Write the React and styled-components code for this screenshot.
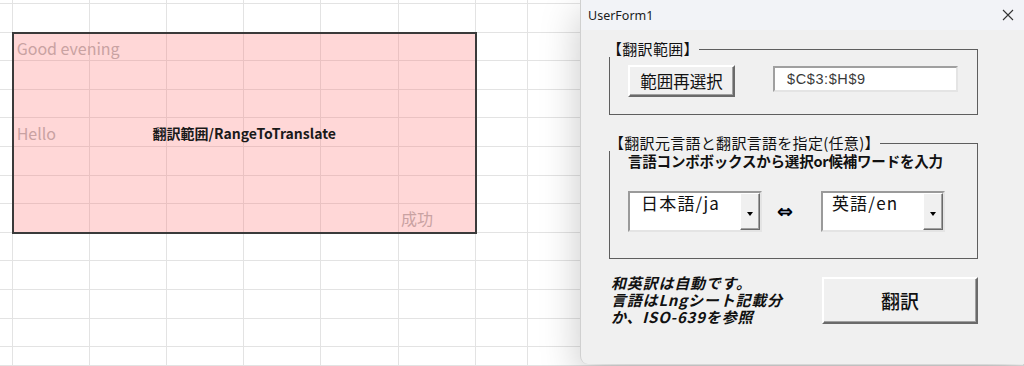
import React from "react"
import styled, { createGlobalStyle } from "styled-components"

const GlobalStyle = createGlobalStyle`
  html, body {
    margin: 0;
    padding: 0;
    width: 1024px;
    height: 366px;
    overflow: hidden;
    background: #ffffff;
  }
  #root {
    position: relative;
    width: 1024px;
    height: 366px;
  }
`

const COLS = 9
const ROWS = 14

const Sheet = styled.div`
  display: grid;
  grid-template-columns: 12.7px repeat(6, 77.2px) 52.3px 1fr;
  grid-template-rows: 4px repeat(12, 28.6px) 1fr;
  width: 1024px;
  height: 366px;
  font-family: "Noto Sans CJK JP", "Noto Sans", sans-serif;
`

const Cell = styled.div`
  border-right: 1px solid #e3e3e3;
  border-bottom: 1px solid #e3e3e3;
  grid-column: ${p => p.$col};
  grid-row: ${p => p.$row};
`

const Range = styled.div`
  grid-column: 2 / 8;
  grid-row: 3 / 10;
  margin: -1px -1px -1px -1px;
  border: 2px solid #3a3a3a;
  background: rgba(255, 100, 100, 0.26);
  display: grid;
  grid-template-columns: repeat(6, 1fr);
  grid-template-rows: repeat(7, 1fr);
  z-index: 1;
`

const CellText = styled.div`
  grid-column: ${p => p.$col};
  grid-row: ${p => p.$row};
  display: flex;
  align-items: center;
  justify-content: ${p => (p.$center ? "center" : "flex-start")};
  padding-left: ${p => (p.$center ? "0" : "3px")};
  font-size: ${p => (p.$bold ? "14px" : "16px")};
  font-weight: ${p => (p.$bold ? 700 : 400)};
  color: ${p => (p.$bold ? "#1a1a1a" : "#c9a2a2")};
  white-space: nowrap;
`

const Dialog = styled.div`
  position: absolute;
  left: 580px;
  top: 0;
  width: 444px;
  height: 364px;
  background: #f0f0f0;
  border-left: 1px solid #d0d0d0;
  box-sizing: border-box;
  border-radius: 0 0 0 8px;
  box-shadow: 0 12px 40px rgba(0, 0, 0, 0.22);
  display: flex;
  flex-direction: column;
  z-index: 2;
  font-family: "Noto Sans CJK JP", "Noto Sans", sans-serif;
  color: #111;
`

const TitleBar = styled.div`
  height: 30px;
  flex: 0 0 30px;
  background: #f2f3f7;
  display: flex;
  align-items: center;
  justify-content: space-between;
  padding: 0 10px 0 7px;
  font-family: "Noto Sans", "Open Sans", sans-serif;
  font-size: 12.5px;
  color: #1b1b1b;
`

const Body = styled.div`
  display: flex;
  flex-direction: column;
  padding: 11px 46px 0 28px;
`

const Frame = styled.fieldset`
  margin: ${p => (p.$gap ? `${p.$gap}px 0 0` : "0")};
  padding: ${p => p.$pad};
  min-width: 0;
  border: 1px solid #5e5e5e;
  border-radius: 0;
`

/* a legend sits after the fieldset's left padding, so pull it back to the border */
const Legend = styled.legend`
  padding: 0;
  margin-left: ${p => p.$shift}px;
  font-size: 15px;
  line-height: 16px;
  color: #111;
  letter-spacing: 0.3px;
`

const Row = styled.div`
  display: flex;
  align-items: ${p => p.$align || "flex-start"};
  margin-top: ${p => p.$top || 0}px;
`

const RaisedButton = styled.button`
  width: ${p => p.$w}px;
  height: ${p => p.$h}px;
  box-sizing: border-box;
  background: #f0f0f0;
  border: 2px solid;
  border-color: #ffffff #6a6a6a #6a6a6a #ffffff;
  box-shadow: inset -1px -1px 0 #a0a0a0;
  font-family: "Noto Sans CJK JP", sans-serif;
  font-size: ${p => p.$size}px;
  font-weight: ${p => p.$weight || 400};
  color: #111;
  padding: 0;
  display: flex;
  align-items: center;
  justify-content: center;
`

const TextBox = styled.div`
  width: 185px;
  height: 26px;
  box-sizing: border-box;
  margin: 1px 0 0 38px;
  background: #fff;
  border: 2px solid;
  border-color: #a0a0a0 #e4e4e4 #e4e4e4 #a0a0a0;
  padding-left: 12px;
  display: flex;
  align-items: center;
  font-family: "Liberation Sans", Arial, sans-serif;
  font-size: 14.5px;
  letter-spacing: 0.6px;
  color: #3a3a3a;
`

const Caption = styled.div`
  font-size: 14.5px;
  line-height: 18px;
  font-weight: 700;
  letter-spacing: -0.2px;
  white-space: nowrap;
  margin-top: 1px;
`

const Combo = styled.div`
  width: ${p => p.$w}px;
  height: 41px;
  box-sizing: border-box;
  background: #fff;
  border: 2px solid;
  border-color: #9a9a9a #e4e4e4 #e4e4e4 #9a9a9a;
  display: flex;
`

const ComboText = styled.div`
  flex: 1;
  padding: 0 0 0 ${p => p.$indent}px;
  font-size: 17px;
  line-height: 20px;
  letter-spacing: 1.2px;
  white-space: nowrap;
`

const DropButton = styled.div`
  width: 20px;
  box-sizing: border-box;
  background: #f0f0f0;
  border: 1px solid;
  border-color: #ffffff #6a6a6a #6a6a6a #ffffff;
  box-shadow: inset -1px -1px 0 #a0a0a0;
  display: flex;
  align-items: center;
  justify-content: center;
  padding-top: 4px;

  &::after {
    content: "";
    border-left: 3.5px solid transparent;
    border-right: 3.5px solid transparent;
    border-top: 4px solid #000;
  }
`

const Swap = styled.div`
  margin: 0 28px 0 15px;
  font-size: 19px;
  font-weight: 700;
  font-family: "DejaVu Sans", sans-serif;
  line-height: 1;
  color: #000;
  text-shadow: 0 0 0.6px #2d5fb0;
`

const Footer = styled.div`
  display: flex;
  justify-content: space-between;
  align-items: flex-start;
  margin-top: 18px;
  padding-left: 2px;
`

const Note = styled.div`
  font-size: 15px;
  line-height: 17px;
  font-weight: 700;
  font-style: italic;
  letter-spacing: 0.8px;
  white-space: nowrap;
  margin-top: -3px;
`

const CloseIcon = () => (
  <svg width="12" height="12" viewBox="0 0 12 12">
    <path d="M1 1 L11 11 M11 1 L1 11" stroke="#333" strokeWidth="1.1" fill="none" />
  </svg>
)

const App = () => {
  const cells = []
  for (let r = 1; r <= ROWS; r++) {
    for (let c = 1; c <= COLS; c++) {
      cells.push(<Cell key={`${r}-${c}`} $row={r} $col={c} />)
    }
  }

  return (
    <>
      <GlobalStyle />
      <Sheet>
        {cells}
        <Range>
          <CellText $row={1} $col="1 / 4">Good evening</CellText>
          <CellText $row={4} $col={1}>Hello</CellText>
          <CellText $row={4} $col="1 / 7" $center $bold>
            翻訳範囲/RangeToTranslate
          </CellText>
          <CellText $row={7} $col={6}>成功</CellText>
        </Range>
      </Sheet>

      <Dialog>
        <TitleBar>
          <span>UserForm1</span>
          <CloseIcon />
        </TitleBar>
        <Body>
          <Frame $pad="8px 19px 17px 18px">
            <Legend $shift={-21}>【翻訳範囲】</Legend>
            <Row>
              <RaisedButton $w={107} $h={32} $size={16.5}>
                範囲再選択
              </RaisedButton>
              <TextBox>$C$3:$H$9</TextBox>
            </Row>
          </Frame>

          <Frame $gap={20} $pad="0 10px 26px 18px">
            <Legend $shift={-19}>【翻訳元言語と翻訳言語を指定(任意)】</Legend>
            <Caption>言語コンボボックスから選択or候補ワードを入力</Caption>
            <Row $align="center" $top={21}>
              <Combo $w={134}>
                <ComboText $indent={11}>日本語/ja</ComboText>
                <DropButton />
              </Combo>
              <Swap>⇔</Swap>
              <Combo $w={124}>
                <ComboText $indent={9}>英語/en</ComboText>
                <DropButton />
              </Combo>
            </Row>
          </Frame>

          <Footer>
            <Note>
              和英訳は自動です。
              <br />
              言語はLngシート記載分
              <br />
              か、ISO-639を参照
            </Note>
            <RaisedButton $w={156} $h={47} $size={19} $weight={500}>
              翻訳
            </RaisedButton>
          </Footer>
        </Body>
      </Dialog>
    </>
  )
}

export default App
